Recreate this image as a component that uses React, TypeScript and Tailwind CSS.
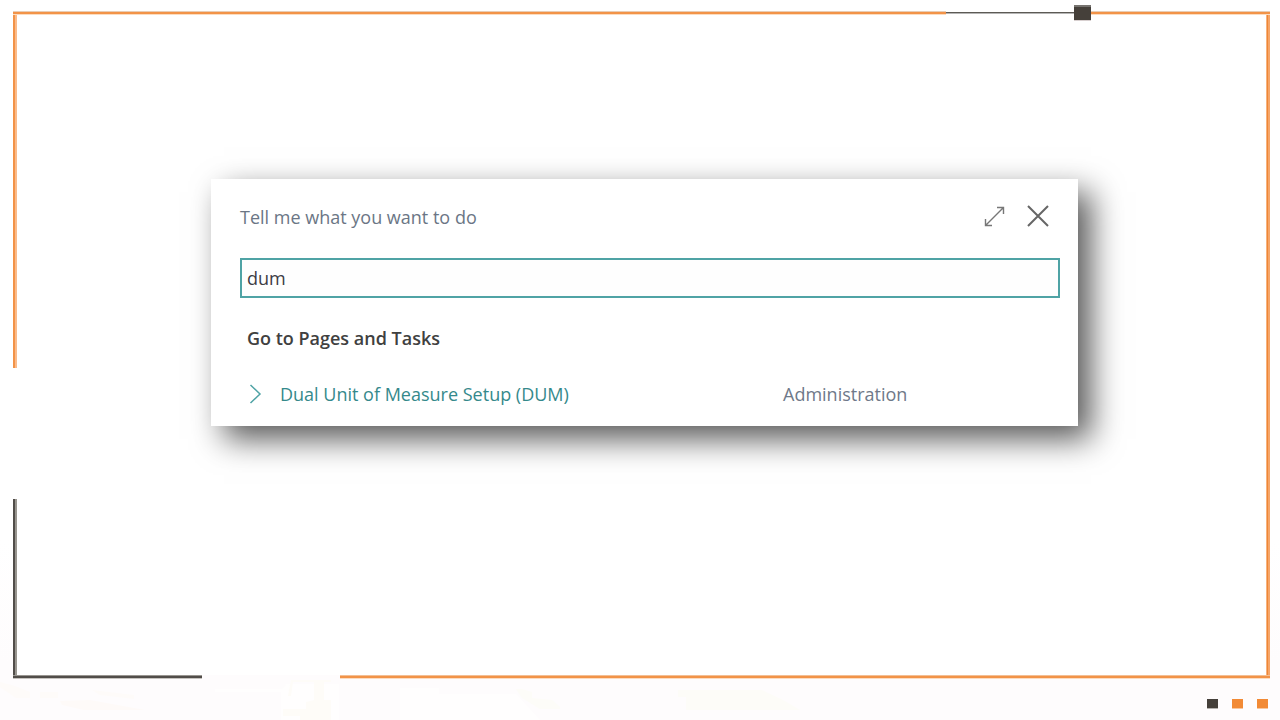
import React, { useState } from 'react'

const FooterArt = () => {
  return (
    <svg className="absolute left-0 bottom-0 w-full h-10" viewBox="0 0 1280 40" preserveAspectRatio="none" aria-hidden="true">
      <path d="M281 10L286 4H339V40H281Z" fill="#fffefe" />
      <path d="M215 9H285V12H215ZM400 8H439V14H516L540 40H400Z" fill="#fffefe" />
      <path d="M291 0H331V2H324V20H331V40H300V36H283V29H306V22L314 20V2H293L291 16H288Z" fill="#fefcf8" />
      <path d="M516 9H522L532 12V18L552 20L560 27V29H540L522 18Z" fill="#fdfcf8" />
      <path d="M678 10H762L785 21L800 30H686V17H678Z" fill="#fdfcf8" />
      <path d="M0 2L15 6L30 12V18H16L0 7ZM40 12H58V18H40ZM92 10L134 15V19L100 15Z" fill="#fefbf9" />
      <path d="M60 21L90 20L145 30H84L62 25Z" fill="#fefaf8" />
    </svg>
  )
}

const SearchDialog = () => {
  const [query, setQuery] = useState("dum")
  return (
    <section className="w-full max-w-[867px] bg-white pl-[29px] pr-[18px] pt-[22px] pb-4 text-[18px] leading-8 shadow-[13px_13px_30px_rgba(0,0,0,0.66)]">
      <div className="flex items-center justify-between pr-[10px]">
        <label htmlFor="query" className="text-[#6b7685]">Tell me what you want to do</label>
        <div className="flex items-center gap-5">
          <button type="button" aria-label="Expand">
            <svg className="size-6" viewBox="0 0 24 24" fill="none" stroke="#777777" strokeWidth="1.4">
              <path d="M3.5 20.5L21.5 2.5M15 2.5H21.5V9M3.5 14V20.5H10" />
            </svg>
          </button>
          <button type="button" aria-label="Close">
            <svg className="size-6" viewBox="0 0 24 24" fill="none" stroke="#666666" strokeWidth="2">
              <path d="M2 1L22 21M22 1L2 21" />
            </svg>
          </button>
        </div>
      </div>
      <input
        id="query"
        type="text"
        value={query}
        onChange={(e) => setQuery(e.target.value)}
        className="mt-[25px] block w-full h-10 border-2 border-[#4fa3a5] bg-[#fefefe] px-[5px] text-[#3c3c44] outline-none"
      />
      <h2 className="mt-6 pl-[7px] font-semibold text-[#404040]">Go to Pages and Tasks</h2>
      <div className="mt-6 flex items-center pl-[7px]">
        <a href="#" className="flex flex-1 items-center gap-[15px] text-[#35898b]">
          <svg className="w-[18px] h-5" viewBox="0 0 18 20" fill="none" stroke="#4fa3a5" strokeWidth="1.5">
            <path d="M3.5 1L13 10L3.5 19" />
          </svg>
          Dual Unit of Measure Setup (DUM)
        </a>
        <span className="w-[277px] text-[#6f7989]">Administration</span>
      </div>
    </section>
  )
}

const App = () => {
  return (
    <div className="min-h-screen flex flex-col bg-[linear-gradient(#ffffff_75%,#fefcfd_92%)] font-['Open_Sans','Noto_Sans',sans-serif]">
      {/* top rule */}
      <div className="relative z-10 mt-[11px] ml-[13px] mr-[10px] flex h-1 items-center">
        <div className="flex-[933] h-1 border-t border-b border-t-[#e8cdb6] border-b-[#fcdcc0] bg-[#f29348]"></div>
        <div className="flex-[128] h-0.5 border-b border-[#b5b5b5] bg-[#5c5a55]"></div>
        <div className="w-[17px] h-4 shrink-0 border-t-2 border-b border-t-[#76736f] border-b-[#d8d0d0] bg-[#45403a]"></div>
        <div className="flex-[179] h-1 border-t border-b border-t-[#e8cdb6] border-b-[#fcdcc0] bg-[#f29348]"></div>
      </div>

      <div className="ml-[13px] mr-[10px] flex flex-1">
        <div className="flex w-1 flex-col">
          <div className="flex-[353] border-r-2 border-[#fbbb8a] bg-[#f29348]"></div>
          <div className="flex-[131]"></div>
          <div className="flex-[176] border-r-2 border-[#98958f] bg-[#514d49]"></div>
        </div>
        <main className="flex flex-1 items-start justify-center bg-white pl-[6px] pt-[164px] pb-12">
          <SearchDialog />
        </main>
        <div className="w-1 border-l border-r-2 border-l-[#f6b27e] border-r-[#f6a568] bg-[#ee8636]"></div>
      </div>

      {/* bottom rule */}
      <div className="ml-[13px] mr-[10px] flex h-1">
        <div className="flex-[189] border-t border-b border-t-[#989590] border-b-[#c6c3bf] bg-[#514d49]"></div>
        <div className="flex-[138]"></div>
        <div className="flex-[930] border-t border-b border-t-[#f3bf94] border-b-[#fcdcc0] bg-[#f29348]"></div>
      </div>

      <footer className="relative flex h-[41px] items-start justify-end gap-[14px] pr-3 pt-5">
        <FooterArt />
        <span className="relative h-[10px] w-[11px] border-b border-[#b5b2ae] bg-[#45403a]"></span>
        <span className="relative h-[10px] w-[11px] border-b border-[#f9c79c] bg-[#f28a35]"></span>
        <span className="relative h-[10px] w-[11px] border-b border-[#f9c79c] bg-[#f28a35]"></span>
      </footer>
    </div>
  )
}

export default App
